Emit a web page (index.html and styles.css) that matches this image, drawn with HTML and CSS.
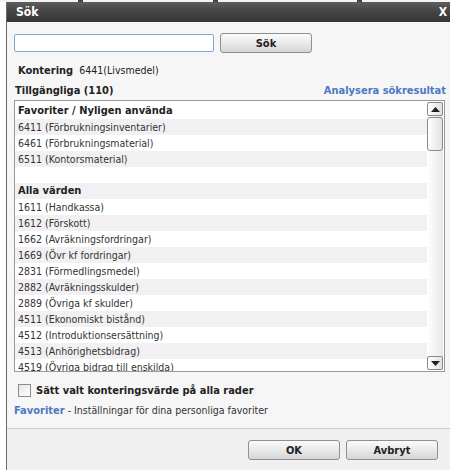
FILE: index.html
```html
<!DOCTYPE html>
<html lang="sv">
<head>
<meta charset="utf-8">
<title>Sök</title>
<link rel="stylesheet" href="styles.css">
</head>
<body>
<div class="backdrop">
  <span class="mark m1"></span><span class="mark m2"></span><span class="mark m3"></span>
</div>
<div class="dialog">
  <div class="titlebar">
    <span class="title">Sök</span>
    <span class="close">X</span>
  </div>
  <div class="content">
    <div class="search-row">
      <input class="search-input" type="text">
      <button class="btn search-btn">Sök</button>
    </div>
    <div class="kontering"><b>Kontering</b> <span class="kval">6441(Livsmedel)</span></div>
    <div class="list-head">
      <span class="avail">Tillgängliga (110)</span>
      <span class="analyse">Analysera sökresultat</span>
    </div>
    <div class="listbox">
      <div class="items">
        <div class="row group">Favoriter / Nyligen använda</div>
        <div class="row">6411 (Förbrukningsinventarier)</div>
        <div class="row">6461 (Förbrukningsmaterial)</div>
        <div class="row">6511 (Kontorsmaterial)</div>
        <div class="row"></div>
        <div class="row group">Alla värden</div>
        <div class="row">1611 (Handkassa)</div>
        <div class="row">1612 (Förskott)</div>
        <div class="row">1662 (Avräkningsfordringar)</div>
        <div class="row">1669 (Övr kf fordringar)</div>
        <div class="row">2831 (Förmedlingsmedel)</div>
        <div class="row">2882 (Avräkningsskulder)</div>
        <div class="row">2889 (Övriga kf skulder)</div>
        <div class="row">4511 (Ekonomiskt bistånd)</div>
        <div class="row">4512 (Introduktionsersättning)</div>
        <div class="row">4513 (Anhörighetsbidrag)</div>
        <div class="row">4519 (Övriga bidrag till enskilda)</div>
      </div>
      <div class="scrollbar">
        <div class="sb-btn"><svg width="9" height="5" viewBox="0 0 9 5"><path d="M0 5 L4.5 0 L9 5 Z" fill="#222"/></svg></div>
        <div class="sb-thumb"></div>
        <div class="sb-track"></div>
        <div class="sb-btn"><svg width="9" height="5" viewBox="0 0 9 5"><path d="M0 0 L9 0 L4.5 5 Z" fill="#222"/></svg></div>
      </div>
    </div>
    <label class="check-row"><span class="checkbox"></span><b>Sätt valt konteringsvärde på alla rader</b></label>
    <div class="fav-row"><span class="fav-link">Favoriter</span> - Inställningar för dina personliga favoriter</div>
  </div>
  <div class="footer">
    <button class="btn">OK</button>
    <button class="btn">Avbryt</button>
  </div>
</div>
</body>
</html>
```

FILE: styles.css
```css
html, body {
  margin: 0;
  padding: 0;
  background: #ffffff;
  font-family: "DejaVu Sans Condensed", "DejaVu Sans", sans-serif;
  font-size: 11px;
  color: #333333;
  overflow: hidden;
}
.backdrop {
  position: relative;
  height: 2px;
  background: #f4f4f4;
}
.mark {
  position: absolute;
  top: 0;
  width: 5px;
  height: 2px;
  background: #444;
}
.m1 { left: 78px; }
.m2 { left: 213px; }
.m3 { left: 357px; }
.dialog {
  margin-left: 6px;
  width: 452px;
  border-left: 1px solid #6a6a6a;
  background: #f6f6f6;
  height: 470px;
}
.titlebar {
  height: 20px;
  background: linear-gradient(#5e5e5e, #484848 40%, #353535);
  display: flex;
  align-items: center;
  justify-content: space-between;
  padding: 0 8px 0 9px;
  color: #ffffff;
  font-weight: bold;
  font-size: 12px;
}
.close {
  font-size: 12px;
  margin-right: 4px;
}
.content {
  padding: 11px 6px 0 7px;
}
.search-row {
  display: flex;
  align-items: center;
  gap: 6px;
  height: 20px;
}
.search-input {
  box-sizing: border-box;
  width: 200px;
  height: 18px;
  margin: 0;
  border: 1px solid #7fa6d8;
  border-radius: 2px;
  background: #ffffff;
  padding: 0 3px;
}
.btn {
  box-sizing: border-box;
  width: 92px;
  height: 20px;
  margin: 0;
  padding: 0;
  border: 1px solid #8f8f8f;
  border-radius: 3px;
  background: linear-gradient(#fbfbfb, #e9e9e9 50%, #d6d6d6);
  font-family: "DejaVu Sans Condensed", "DejaVu Sans", sans-serif;
  font-size: 11px;
  font-weight: bold;
  color: #222;
}
.kontering {
  margin-top: 10px;
  padding-left: 4px;
  height: 14px;
  line-height: 14px;
  color: #222;
}
.kval {
  margin-left: 3px;
  font-size: 10.5px;
}
.list-head {
  margin-top: 7px;
  width: 431px;
  display: flex;
  justify-content: space-between;
  align-items: flex-end;
  height: 14px;
  line-height: 14px;
  font-weight: bold;
  color: #222;
}
.avail { padding-left: 1px; }
.analyse {
  color: #4c79c4;
  margin-right: -1px;
}
.listbox {
  margin-top: 2px;
  box-sizing: border-box;
  width: 431px;
  height: 272px;
  border: 1px solid #9a9a9a;
  background: #ffffff;
  display: flex;
  overflow: hidden;
}
.items {
  flex: 1;
  padding-top: 2px;
  overflow: hidden;
}
.row {
  height: 16px;
  line-height: 16px;
  padding-left: 3px;
  white-space: nowrap;
  color: #333;
  font-size: 10.5px;
}
.row:nth-child(even) { background: #f2f0f2; }
.row.group {
  font-weight: bold;
  font-size: 11px;
  color: #222;
}
.scrollbar {
  width: 16px;
  margin: 1px 1px 1px 0;
  display: flex;
  flex-direction: column;
  background: linear-gradient(90deg, #ffffff, #e8e8e8);
}
.sb-btn {
  box-sizing: border-box;
  height: 14px;
  border: 1px solid #8a8a8a;
  border-radius: 2px;
  background: linear-gradient(90deg, #ffffff, #e0e0e0);
  display: flex;
  align-items: center;
  justify-content: center;
}
.sb-thumb {
  box-sizing: border-box;
  height: 34px;
  margin-top: 1px;
  border: 1px solid #8a8a8a;
  border-radius: 3px;
  background: linear-gradient(90deg, #ffffff, #e2e2e2);
}
.sb-track { flex: 1; }
.check-row {
  margin-top: 11px;
  display: flex;
  align-items: center;
  gap: 5px;
  padding-left: 4px;
  height: 14px;
  color: #222;
  font-size: 11px;
}
.checkbox {
  box-sizing: border-box;
  width: 13px;
  height: 13px;
  border: 1px solid #8c8c8c;
  background: linear-gradient(135deg, #e6e6e6, #ffffff);
}
.fav-row {
  margin-top: 6px;
  height: 14px;
  line-height: 14px;
  color: #333;
  font-size: 10.5px;
}
.fav-link {
  color: #4c79c4;
  font-weight: bold;
  font-size: 11px;
}
.footer {
  margin-top: 11px;
  border-top: 1px solid #cfcfcf;
  background: #f0f0f0;
  height: 60px;
  display: flex;
  justify-content: flex-end;
  gap: 6px;
  padding: 11px 12px 0 0;
  box-sizing: border-box;
  width: 443px;
}
```
